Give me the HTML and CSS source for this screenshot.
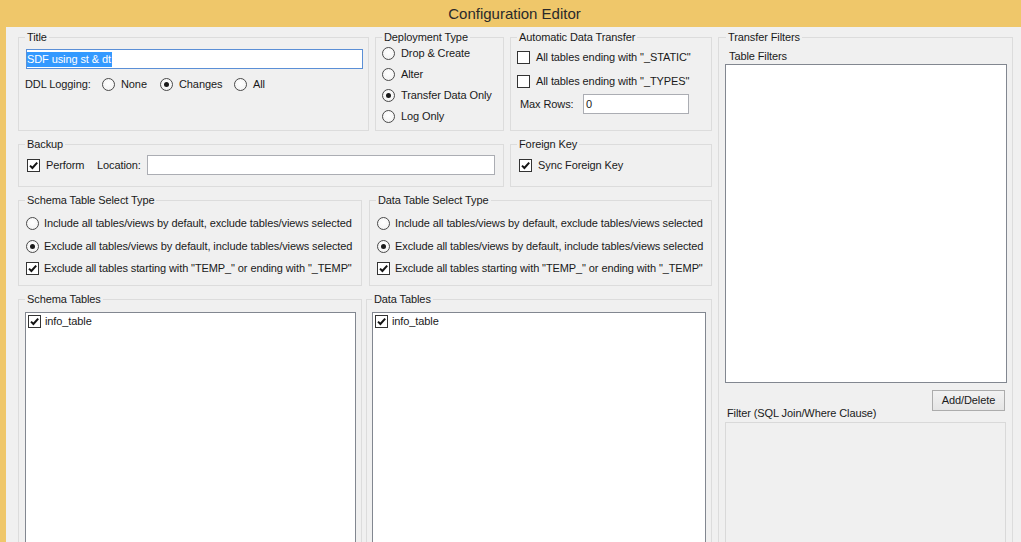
FILE: index.html
```html
<!DOCTYPE html>
<html>
<head>
<meta charset="utf-8">
<title>Configuration Editor</title>
<link rel="stylesheet" href="styles.css">
</head>
<body>
<div class="window">
  <header class="titlebar">Configuration Editor</header>
  <main class="client">
    <div class="left">
      <div class="row row1">
        <fieldset class="group g-title">
          <legend>Title</legend>
          <div class="textbox focused title-input"><span class="sel">SDF using st &amp; dt</span></div>
          <div class="ddl">
            <span class="ddl-label">DDL Logging:</span>
            <div class="opt w58"><span class="radio"></span><span>None</span></div>
            <div class="opt w74"><span class="radio on"></span><span>Changes</span></div>
            <div class="opt"><span class="radio"></span><span>All</span></div>
          </div>
        </fieldset>
        <fieldset class="group g-deploy">
          <legend>Deployment Type</legend>
          <div class="opt drow first"><span class="radio"></span><span>Drop &amp; Create</span></div>
          <div class="opt drow"><span class="radio"></span><span>Alter</span></div>
          <div class="opt drow"><span class="radio on"></span><span>Transfer Data Only</span></div>
          <div class="opt drow"><span class="radio"></span><span>Log Only</span></div>
        </fieldset>
        <fieldset class="group g-auto">
          <legend>Automatic Data Transfer</legend>
          <div class="opt arow first"><span class="check"></span><span>All tables ending with "_STATIC"</span></div>
          <div class="opt arow"><span class="check"></span><span>All tables ending with "_TYPES"</span></div>
          <div class="maxrows">
            <span class="maxrows-label">Max Rows:</span>
            <div class="textbox maxrows-input">0</div>
          </div>
        </fieldset>
      </div>

      <div class="row row2">
        <fieldset class="group g-backup">
          <legend>Backup</legend>
          <div class="backup-row">
            <div class="opt perform"><span class="check on"><svg viewBox="0 0 11 11"><path d="M2 5.6 L4.4 8 L9.2 2.6"/></svg></span><span>Perform</span></div>
            <span class="loc-label">Location:</span>
            <div class="textbox loc-input"></div>
          </div>
        </fieldset>
        <fieldset class="group g-fk">
          <legend>Foreign Key</legend>
          <div class="opt fk-row"><span class="check on"><svg viewBox="0 0 11 11"><path d="M2 5.6 L4.4 8 L9.2 2.6"/></svg></span><span>Sync Foreign Key</span></div>
        </fieldset>
      </div>

      <div class="row row3">
        <fieldset class="group g-sel g-schema-sel">
          <legend>Schema Table Select Type</legend>
          <div class="opt srow r1"><span class="radio"></span><span>Include all tables/views by default, exclude tables/views selected</span></div>
          <div class="opt srow r2"><span class="radio on"></span><span>Exclude all tables/views by default, include tables/views selected</span></div>
          <div class="opt srow"><span class="check on"><svg viewBox="0 0 11 11"><path d="M2 5.6 L4.4 8 L9.2 2.6"/></svg></span><span>Exclude all tables starting with "TEMP_" or ending with "_TEMP"</span></div>
        </fieldset>
        <fieldset class="group g-sel g-data-sel">
          <legend>Data Table Select Type</legend>
          <div class="opt srow r1"><span class="radio"></span><span>Include all tables/views by default, exclude tables/views selected</span></div>
          <div class="opt srow r2"><span class="radio on"></span><span>Exclude all tables/views by default, include tables/views selected</span></div>
          <div class="opt srow"><span class="check on"><svg viewBox="0 0 11 11"><path d="M2 5.6 L4.4 8 L9.2 2.6"/></svg></span><span>Exclude all tables starting with "TEMP_" or ending with "_TEMP"</span></div>
        </fieldset>
      </div>

      <div class="row row4">
        <fieldset class="group g-tables g-schema-tables">
          <legend>Schema Tables</legend>
          <div class="listbox tables-list">
            <div class="item"><span class="check on"><svg viewBox="0 0 11 11"><path d="M2 5.6 L4.4 8 L9.2 2.6"/></svg></span><span>info_table</span></div>
          </div>
        </fieldset>
        <fieldset class="group g-tables g-data-tables">
          <legend>Data Tables</legend>
          <div class="listbox tables-list">
            <div class="item"><span class="check on"><svg viewBox="0 0 11 11"><path d="M2 5.6 L4.4 8 L9.2 2.6"/></svg></span><span>info_table</span></div>
          </div>
        </fieldset>
      </div>
    </div>

    <fieldset class="group g-transfer">
      <legend>Transfer Filters</legend>
      <div class="caption">Table Filters</div>
      <div class="listbox filters-list"></div>
      <div class="filter-head">
        <span class="filter-label">Filter (SQL Join/Where Clause)</span>
        <div class="button">Add/Delete</div>
      </div>
      <div class="filter-box"></div>
    </fieldset>
  </main>
</div>
</body>
</html>
```

FILE: styles.css
```css
* { box-sizing: border-box; }

html, body {
  margin: 0;
  padding: 0;
  background: #efc76a;
}

body {
  font-family: "Liberation Sans", Arial, sans-serif;
  font-size: 11px;
  line-height: 13px;
  letter-spacing: -0.1px;
  color: #1a1a1a;
  overflow: hidden;
}

.window {
  width: 1021px;
  height: 542px;
  display: flex;
  flex-direction: column;
}

.titlebar {
  height: 27px;
  flex: none;
  background: #efc76a;
  display: flex;
  align-items: center;
  justify-content: center;
  padding-left: 8px;
  font-size: 15px;
  letter-spacing: 0;
  color: #2a2a2a;
}

.client {
  flex: 1;
  margin-left: 6px;
  background: #f0f0f0;
  padding: 4px 0 0 12px;
  display: flex;
  gap: 6px;
  overflow: hidden;
}

.left {
  width: 694px;
  flex: none;
  display: flex;
  flex-direction: column;
  gap: 7px;
}

.row {
  display: flex;
  flex: none;
}

.row1 { gap: 6px; height: 100px; }
.row2 { gap: 6px; height: 49px; }
.row3 { gap: 7px; height: 92px; }
.row4 { gap: 4px; height: 300px; }

/* group box */
.group {
  margin: 0;
  border: 1px solid #dcdcdc;
  padding: 0 5px 0 6px;
  min-width: 0;
  height: 100%;
  display: flex;
  flex-direction: column;
  align-items: stretch;
}

.group > legend {
  padding: 0 2px;
  margin: 0;
  line-height: 13px;
  font-size: 11px;
  color: #1a1a1a;
}

.g-title { width: 351px; }
.g-deploy { width: 129px; }
.g-auto { width: 202px; }
.g-backup { width: 486px; }
.g-fk { width: 202px; }
.g-schema-sel { width: 344px; }
.g-data-sel { width: 343px; }
.g-schema-tables { width: 344px; }
.g-data-tables { width: 346px; padding-left: 5px; }

.g-transfer {
  width: 295px;
  height: 600px;
  flex: none;
  padding-left: 6px;
  padding-right: 5px;
}
.g-transfer > legend { margin-left: 1px; }

/* controls */
.opt {
  display: flex;
  align-items: center;
  gap: 6px;
  white-space: nowrap;
}

.radio {
  width: 13px;
  height: 13px;
  flex: none;
  border-radius: 50%;
  border: 1px solid #4a4a4a;
  background: radial-gradient(circle at 50% 40%, #ffffff 0%, #f4f4f4 70%, #e6e6e6 100%);
  display: flex;
  align-items: center;
  justify-content: center;
}
.radio.on::after {
  content: "";
  width: 5px;
  height: 5px;
  border-radius: 50%;
  background: #1a1a1a;
}

.check {
  width: 13px;
  height: 13px;
  flex: none;
  border: 1px solid #333333;
  background: #ffffff;
  display: flex;
}
.check svg {
  width: 11px;
  height: 11px;
  fill: none;
  stroke: #141414;
  stroke-width: 2;
}

.textbox {
  background: #ffffff;
  border: 1px solid #abadb3;
  height: 20px;
  display: flex;
  align-items: center;
  padding-left: 2px;
}
.textbox.focused { border-color: #5b8fd6; }

.sel {
  background: #3399ff;
  color: #ffffff;
  line-height: 15px;
  padding: 0 1px 0 0;
}

/* Title group */
.title-input {
  margin-top: 5px;
  margin-left: 1px;
  padding-left: 0;
}
.ddl {
  margin-top: 7px;
  height: 16px;
  display: flex;
  align-items: center;
}
.ddl-label { width: 77px; flex: none; }
.w58 { width: 58px; }
.w74 { width: 74px; }

/* Deployment */
.drow { height: 21px; }
.drow.first { margin-top: -1px; }

/* Auto transfer */
.arow { height: 24px; }
.arow.first { margin-top: 1px; }
.maxrows {
  margin-top: 1px;
  display: flex;
  align-items: center;
  height: 20px;
}
.maxrows-label { margin-left: 3px; width: 63px; flex: none; }
.maxrows-input { width: 106px; }

/* Backup */
.backup-row {
  margin-top: 4px;
  height: 20px;
  display: flex;
  align-items: center;
}
.perform { width: 70px; margin-left: 2px; flex: none; }
.loc-label { width: 50px; flex: none; }
.loc-input { width: 348px; }

.fk-row { margin-top: 4px; height: 20px; margin-left: 2px; }

/* select type */
.srow { height: 22px; gap: 5px; margin-left: 1px; }
.srow.r1 { margin-top: 5px; }
.srow.r2 { margin-top: 1px; }

/* tables */
.listbox {
  background: #ffffff;
  border: 1px solid #828790;
}
.tables-list {
  margin-top: 6px;
  height: 300px;
  padding: 0 2px;
}
.item {
  height: 16px;
  display: flex;
  align-items: center;
  gap: 4px;
}

/* transfer filters */
.caption {
  margin-top: 6px;
  margin-left: 4px;
}
.filters-list {
  margin-top: 1px;
  height: 319px;
}
.filter-head {
  margin-top: 7px;
  height: 30px;
  display: flex;
  justify-content: space-between;
  align-items: flex-end;
}
.filter-label { margin-left: 2px; }
.button {
  align-self: flex-start;
  width: 73px;
  height: 21px;
  margin-right: 2px;
  border: 1px solid #acacac;
  background: linear-gradient(#f2f2f2, #e5e5e5);
  display: flex;
  align-items: center;
  justify-content: center;
}
.filter-box {
  margin-top: 2px;
  margin-right: 1px;
  height: 200px;
  background: #f0f0f0;
  border: 1px solid #d9d9d9;
}
```
